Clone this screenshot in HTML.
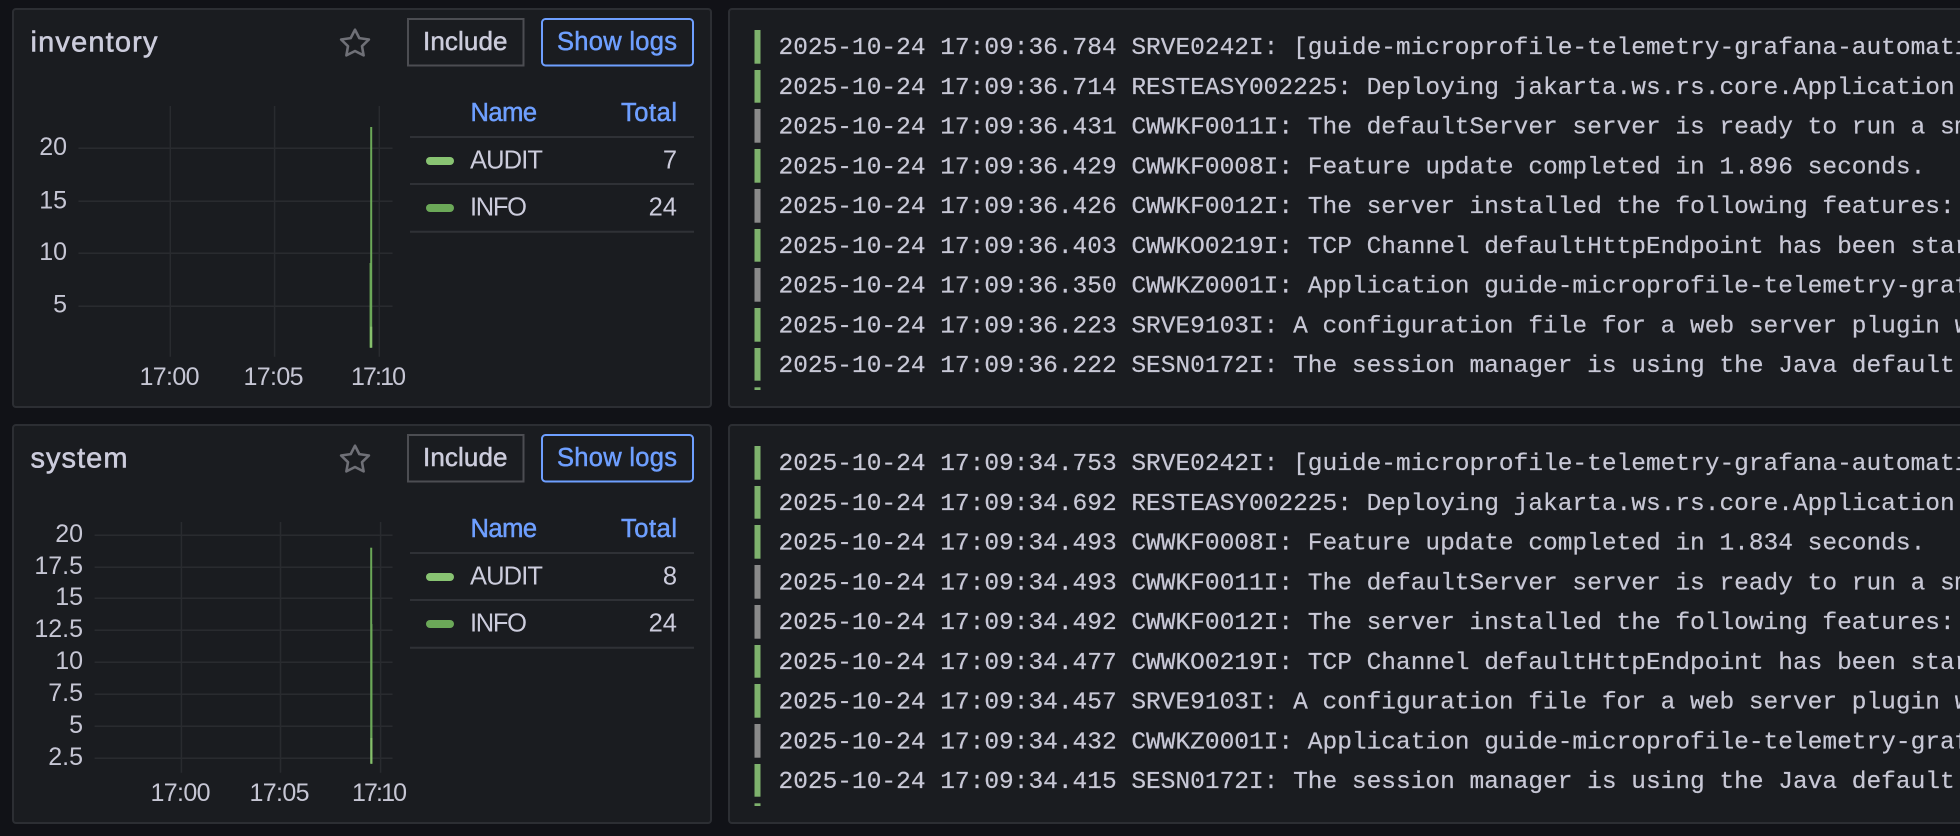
<!DOCTYPE html>
<html lang="en">
<head>
<meta charset="utf-8">
<title>Logs dashboard</title>
<style>
html,body{margin:0;padding:0;width:1960px;height:836px;overflow:hidden;background:#111217}
.panel{position:absolute;box-sizing:border-box;background:#1a1c20;border:2px solid #2c2e33;border-radius:4px}
svg{position:absolute;left:0;top:0}
text{font-family:"Liberation Sans",sans-serif;fill:#ccccdc;font-size:25.5px}
.ax{font-size:25px;fill:#c6c6d4}
.title{font-size:29px;stroke:#ccccdc;stroke-width:.55px}
.m{font-size:26px;stroke-width:.5px}
.btn{stroke:#ccccdc}
.blue{font-size:25.5px;fill:#6e9fff;stroke:#6e9fff;stroke-width:.5px}
.log{font-family:"Liberation Mono",monospace;font-size:24.5px;fill:#c8c8d6;stroke:#c8c8d6;stroke-width:.2px}
.g{stroke:#292b2f;stroke-width:1.5}
.sep{stroke:#2f3136;stroke-width:2}
</style>
</head>
<body>
<div class="panel" style="left:12px;top:8px;width:700px;height:400px"></div>
<div class="panel" style="left:728px;top:8px;width:1300px;height:400px"></div>
<div class="panel" style="left:12px;top:424px;width:700px;height:400px"></div>
<div class="panel" style="left:728px;top:424px;width:1300px;height:400px"></div>

<svg width="1960" height="836" viewBox="0 0 1960 836" xmlns="http://www.w3.org/2000/svg">

<!-- Top left panel -->
<g>
<text class="title" x="30.5" y="51.7" textLength="127" lengthAdjust="spacing">inventory</text>
<path d="M355 29.7l4.3 8.4 9.6 1.4-6.9 6.7 1.6 9.2-8.6-4.4-8.6 4.4 1.6-9.2-6.9-6.7 9.6-1.4z" fill="none" stroke="#6f7077" stroke-width="2.6" stroke-linejoin="round"/>
<rect x="408" y="19" width="115.5" height="46.5" fill="none" stroke="#4c4d52" stroke-width="2"/>
<text class="m btn" x="423" y="50" textLength="84.5" lengthAdjust="spacing">Include</text>
<rect x="542" y="19" width="151" height="46.5" rx="3.5" fill="none" stroke="#6e9fff" stroke-width="2"/>
<text class="blue" x="557" y="50" textLength="120" lengthAdjust="spacing">Show logs</text>

<path class="g" d="M170.3 106V356.7M274.6 106V356.7M379.3 106V356.7M78.5 148.3H392.6M78.5 201.3H392.6M78.5 253.3H392.6M78.5 306.3H392.6" fill="none"/>
<text class="ax" x="67" y="155" text-anchor="end">20</text>
<text class="ax" x="67" y="208.3" text-anchor="end">15</text>
<text class="ax" x="67" y="260" text-anchor="end">10</text>
<text class="ax" x="67" y="312.7" text-anchor="end">5</text>
<text class="ax" x="139.5" y="385" textLength="60" lengthAdjust="spacing">17:00</text>
<text class="ax" x="243.5" y="385" textLength="60" lengthAdjust="spacing">17:05</text>
<text class="ax" x="351" y="385" textLength="55" lengthAdjust="spacing">17:10</text>
<rect x="370.2" y="127" width="2" height="220.7" fill="#6ba858"/>
<rect x="369.6" y="263" width="1.2" height="84.7" fill="#6ba858"/>
<rect x="370" y="326.7" width="2.2" height="21" fill="#86c06c"/>

<text class="blue" x="470.5" y="121" textLength="66.5" lengthAdjust="spacing">Name</text>
<text class="blue" x="621" y="121" textLength="56" lengthAdjust="spacing">Total</text>
<path class="sep" d="M410 137H694M410 184H694M410 231.7H694" fill="none"/>
<rect x="426" y="157" width="28" height="8" rx="4" fill="#88c372"/>
<rect x="426" y="204" width="28" height="8" rx="4" fill="#6ba858"/>
<text x="470" y="168.7" textLength="73" lengthAdjust="spacing">AUDIT</text>
<text x="470" y="215.7" textLength="57" lengthAdjust="spacing">INFO</text>
<text x="677" y="168.7" text-anchor="end">7</text>
<text x="677" y="215.7" text-anchor="end">24</text>
</g>

<!-- Bottom left panel -->
<g>
<text class="title" x="30.5" y="467.7" textLength="97" lengthAdjust="spacing">system</text>
<path d="M355 445.7l4.3 8.4 9.6 1.4-6.9 6.7 1.6 9.2-8.6-4.4-8.6 4.4 1.6-9.2-6.9-6.7 9.6-1.4z" fill="none" stroke="#6f7077" stroke-width="2.6" stroke-linejoin="round"/>
<rect x="408" y="435" width="115.5" height="46.5" fill="none" stroke="#4c4d52" stroke-width="2"/>
<text class="m btn" x="423" y="466" textLength="84.5" lengthAdjust="spacing">Include</text>
<rect x="542" y="435" width="151" height="46.5" rx="3.5" fill="none" stroke="#6e9fff" stroke-width="2"/>
<text class="blue" x="557" y="466" textLength="120" lengthAdjust="spacing">Show logs</text>

<path class="g" d="M181.4 522V772.7M280.5 522V772.7M380.6 522V772.7M94.6 535.3H392.6M94.6 567.3H392.6M94.6 598.3H392.6M94.6 630.3H392.6M94.6 662.3H392.6M94.6 694.3H392.6M94.6 726.3H392.6M94.6 758.3H392.6" fill="none"/>
<text class="ax" x="83" y="542" text-anchor="end">20</text>
<text class="ax" x="83" y="574" text-anchor="end">17.5</text>
<text class="ax" x="83" y="605" text-anchor="end">15</text>
<text class="ax" x="83" y="637" text-anchor="end">12.5</text>
<text class="ax" x="83" y="669" text-anchor="end">10</text>
<text class="ax" x="83" y="701" text-anchor="end">7.5</text>
<text class="ax" x="83" y="733" text-anchor="end">5</text>
<text class="ax" x="83" y="765" text-anchor="end">2.5</text>
<text class="ax" x="150.5" y="801" textLength="60" lengthAdjust="spacing">17:00</text>
<text class="ax" x="249.5" y="801" textLength="60" lengthAdjust="spacing">17:05</text>
<text class="ax" x="352" y="801" textLength="55" lengthAdjust="spacing">17:10</text>
<rect x="370.2" y="547.7" width="2" height="216" fill="#6ba858"/>
<rect x="371" y="624" width="1.4" height="139.7" fill="#6ba858"/>
<rect x="370.4" y="738" width="2" height="25.7" fill="#86c06c"/>

<text class="blue" x="470.5" y="537" textLength="66.5" lengthAdjust="spacing">Name</text>
<text class="blue" x="621" y="537" textLength="56" lengthAdjust="spacing">Total</text>
<path class="sep" d="M410 553H694M410 600H694M410 647.7H694" fill="none"/>
<rect x="426" y="573" width="28" height="8" rx="4" fill="#88c372"/>
<rect x="426" y="620" width="28" height="8" rx="4" fill="#6ba858"/>
<text x="470" y="584.7" textLength="73" lengthAdjust="spacing">AUDIT</text>
<text x="470" y="631.7" textLength="57" lengthAdjust="spacing">INFO</text>
<text x="677" y="584.7" text-anchor="end">8</text>
<text x="677" y="631.7" text-anchor="end">24</text>
</g>

<!-- Top logs -->
<g fill="#7eb26d">
<rect x="754.5" y="30" width="6" height="33.7"/>
<rect x="754.5" y="70" width="6" height="32.7"/>
<rect x="754.5" y="109" width="6" height="33.7" fill="#8a8a8a"/>
<rect x="754.5" y="149" width="6" height="33.7"/>
<rect x="754.5" y="189" width="6" height="33.7" fill="#8a8a8a"/>
<rect x="754.5" y="229" width="6" height="32.7"/>
<rect x="754.5" y="268" width="6" height="33.7" fill="#8a8a8a"/>
<rect x="754.5" y="308" width="6" height="33.7"/>
<rect x="754.5" y="348" width="6" height="32.7"/>
<rect x="754.5" y="387.3" width="6" height="2.7"/>
</g>
<g>
<text class="log" x="778.5" y="54">2025-10-24 17:09:36.784 SRVE0242I: [guide-microprofile-telemetry-grafana-automation-inventory]</text>
<text class="log" x="778.5" y="93.75">2025-10-24 17:09:36.714 RESTEASY002225: Deploying jakarta.ws.rs.core.Application: class</text>
<text class="log" x="778.5" y="133.5">2025-10-24 17:09:36.431 CWWKF0011I: The defaultServer server is ready to run a smarter planet.</text>
<text class="log" x="778.5" y="173.25">2025-10-24 17:09:36.429 CWWKF0008I: Feature update completed in 1.896 seconds.</text>
<text class="log" x="778.5" y="213">2025-10-24 17:09:36.426 CWWKF0012I: The server installed the following features: [beanValidation]</text>
<text class="log" x="778.5" y="252.75">2025-10-24 17:09:36.403 CWWKO0219I: TCP Channel defaultHttpEndpoint has been started and is</text>
<text class="log" x="778.5" y="292.5">2025-10-24 17:09:36.350 CWWKZ0001I: Application guide-microprofile-telemetry-grafana-automation</text>
<text class="log" x="778.5" y="332.25">2025-10-24 17:09:36.223 SRVE9103I: A configuration file for a web server plugin was automatically</text>
<text class="log" x="778.5" y="372">2025-10-24 17:09:36.222 SESN0172I: The session manager is using the Java default SecureRandom</text>
</g>

<!-- Bottom logs -->
<g fill="#7eb26d">
<rect x="754.5" y="446" width="6" height="33.7"/>
<rect x="754.5" y="486" width="6" height="32.7"/>
<rect x="754.5" y="525" width="6" height="33.7"/>
<rect x="754.5" y="565" width="6" height="33.7" fill="#8a8a8a"/>
<rect x="754.5" y="605" width="6" height="33.7" fill="#8a8a8a"/>
<rect x="754.5" y="645" width="6" height="32.7"/>
<rect x="754.5" y="684" width="6" height="33.7"/>
<rect x="754.5" y="724" width="6" height="33.7" fill="#8a8a8a"/>
<rect x="754.5" y="764" width="6" height="32.7"/>
<rect x="754.5" y="803.3" width="6" height="2.7"/>
</g>
<g>
<text class="log" x="778.5" y="470">2025-10-24 17:09:34.753 SRVE0242I: [guide-microprofile-telemetry-grafana-automation-system]</text>
<text class="log" x="778.5" y="509.75">2025-10-24 17:09:34.692 RESTEASY002225: Deploying jakarta.ws.rs.core.Application: class</text>
<text class="log" x="778.5" y="549.5">2025-10-24 17:09:34.493 CWWKF0008I: Feature update completed in 1.834 seconds.</text>
<text class="log" x="778.5" y="589.25">2025-10-24 17:09:34.493 CWWKF0011I: The defaultServer server is ready to run a smarter planet.</text>
<text class="log" x="778.5" y="629">2025-10-24 17:09:34.492 CWWKF0012I: The server installed the following features: [beanValidation]</text>
<text class="log" x="778.5" y="668.75">2025-10-24 17:09:34.477 CWWKO0219I: TCP Channel defaultHttpEndpoint has been started and is</text>
<text class="log" x="778.5" y="708.5">2025-10-24 17:09:34.457 SRVE9103I: A configuration file for a web server plugin was automatically</text>
<text class="log" x="778.5" y="748.25">2025-10-24 17:09:34.432 CWWKZ0001I: Application guide-microprofile-telemetry-grafana-automation</text>
<text class="log" x="778.5" y="788">2025-10-24 17:09:34.415 SESN0172I: The session manager is using the Java default SecureRandom</text>
</g>
</svg>
</body>
</html>
